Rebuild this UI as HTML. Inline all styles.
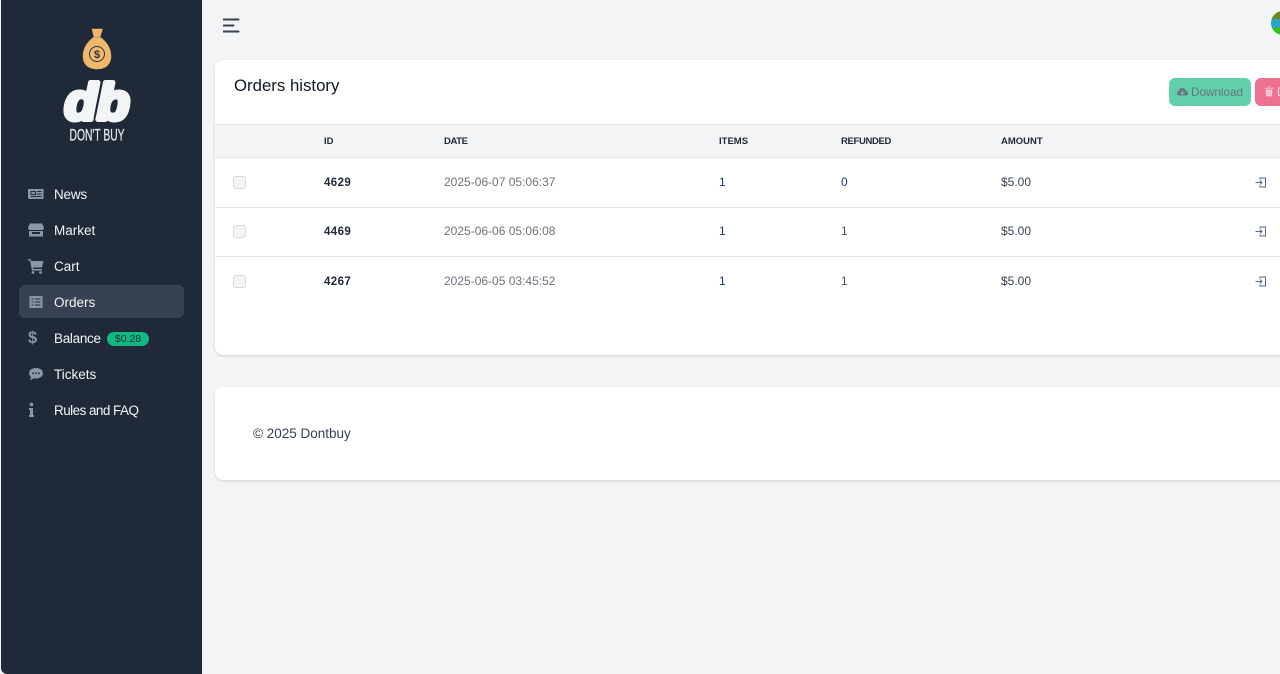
<!DOCTYPE html>
<html><head><meta charset="utf-8">
<style>
*{box-sizing:border-box}
html,body{margin:0;padding:0;width:1280px;height:674px;overflow:hidden;background:#f3f4f6;font-family:"Liberation Sans",sans-serif}
.a{position:absolute;white-space:nowrap}
#side{position:absolute;left:1px;top:0;width:201px;height:674px;background:#1f2937;border-bottom-left-radius:6px}
.nav{position:absolute;left:54px;color:#f3f4f6;font-size:13.5px;line-height:16px;margin-top:1px}
.ic{position:absolute;left:28px;width:16px;height:16px;fill:#8b95a5}
.card{position:absolute;left:215px;width:1075px;background:#fff;border-radius:8px;box-shadow:0 1px 2px rgba(0,0,0,.16)}
.th{position:absolute;top:135px;font-size:9.5px;font-weight:bold;color:#1f2937;line-height:12px;margin-top:1px}
.td{position:absolute;font-size:12px;line-height:14px;color:#374151}
.num{font-weight:bold;color:#1f2937;font-size:11.5px;letter-spacing:.4px}
.cb{position:absolute;left:233px;width:13px;height:13px;border:1px solid #d6d9de;background:#f3f4f6;border-radius:3px}
.ln{position:absolute;left:215px;width:1065px;height:1px;background:#e5e7eb}
</style></head><body>
<div id="side"></div>

<svg class="a" style="left:60px;top:25px" width="75" height="120" viewBox="60 25 75 120">
<path d="M92 29h10.500l-2.500 8C106 41 111 48 111 56 111 65 105 69 97 69 89 69 83 65 83 56 83 48 88 41 94 37z" fill="#f0b86c" stroke="#f0b86c" stroke-width=".5" stroke-linejoin="round"/>
<path d="M93.500 37h7" stroke="#c98f45" stroke-width=".8" fill="none"/>
<circle cx="97" cy="54" r="7.500" fill="none" stroke="#2a3340" stroke-width="1"/>
<text x="97" y="58" font-size="11" font-weight="bold" text-anchor="middle" fill="#2a3340" font-family="Liberation Sans">$</text>
<text x="64.500" y="119.500" font-size="51" font-weight="bold" font-style="italic" fill="#f3f4f6" stroke="#f3f4f6" stroke-width="5" stroke-linejoin="round" textLength="65" lengthAdjust="spacingAndGlyphs" font-family="Liberation Sans">db</text>
<text x="69.500" y="140.500" font-size="16.500" fill="#e5e7eb" stroke="#e5e7eb" stroke-width=".3" textLength="55" lengthAdjust="spacingAndGlyphs" font-family="Liberation Sans">DON'T BUY</text>
</svg>

<svg class="ic" style="top:186px" viewBox="0 0 16 16"><path d="M0 3h15.500v10H1.500Q0 13 0 11.500z"/><path d="M3 5.500h4.500v3H3zM9 5.500h4.500M9 8h4.500M3 10.500h10.500" stroke="#1f2937" stroke-width="1" fill="none"/></svg>
<div class="nav" style="top:186px;letter-spacing:-.2px">News</div>
<svg class="ic" style="top:222px" viewBox="0 0 16 16"><path d="M2 1.500h12l2 4q0 2.500-2 2.500H2Q0 8 0 5.500zM1 9h14v5.500H1zM4 10v2h8v-2z"/></svg>
<div class="nav" style="top:222px">Market</div>
<svg class="ic" style="top:258px" viewBox="0 0 16 16"><path d="M0 1h2.500l.6 2H15.500l-1.500 6.500H5l.3 1.500H14v1.500H4L2 2.500H0z"/><circle cx="5" cy="14.500" r="1.400"/><circle cx="12.500" cy="14.500" r="1.400"/></svg>
<div class="nav" style="top:258px">Cart</div>

<div class="a" style="left:19px;top:285px;width:165px;height:33px;background:#374151;border-radius:6px"></div>
<svg class="ic" style="top:294px" viewBox="0 0 16 16"><path d="M1.500 2h13v12h-13z"/><path d="M3.500 5h2M7 5h5.500M3.500 8h2M7 8h5.500M3.500 11h2M7 11h5.500" stroke="#374151" stroke-width="1.300"/></svg>
<div class="nav" style="top:294px">Orders</div>

<div class="a" style="left:28px;top:329px;font-size:16.500px;font-weight:bold;line-height:18px;color:#8b95a5">$</div>
<div class="nav" style="top:330px;letter-spacing:-.3px">Balance</div>
<div class="a" style="left:107px;top:332px;width:42px;height:14px;border-radius:7px;background:#10b981;color:#1f2937;font-size:10.500px;line-height:14px;text-align:center">$0.28</div>

<svg class="ic" style="top:366px" viewBox="0 0 16 16"><path d="M8 2c4 0 7 2.300 7 5.300s-3 5.300-7 5.300q-1.200 0-2.200-.3Q3.800 14 1.500 14q1.400-1.300 1.600-2.900Q1 9.500 1 7.300C1 4.300 4 2 8 2z"/><circle cx="5" cy="7.300" r=".9" fill="#1f2937"/><circle cx="8" cy="7.300" r=".9" fill="#1f2937"/><circle cx="11" cy="7.300" r=".9" fill="#1f2937"/></svg>
<div class="nav" style="top:366px">Tickets</div>
<svg class="ic" style="top:402px" viewBox="0 0 16 16"><circle cx="3.500" cy="2.500" r="1.800"/><path d="M1 6h4v7h1v2H1v-2h1V8H1z"/></svg>
<div class="nav" style="top:402px;letter-spacing:-.55px">Rules and FAQ</div>

<svg class="a" style="left:223px;top:18px" width="17" height="15" viewBox="0 0 17 15"><path d="M.5 1.500h15M.5 7.500h10M.5 13.500h15" stroke="#374151" stroke-width="2" stroke-linecap="round" fill="none"/></svg>

<svg class="a" style="left:1271px;top:11px" width="9" height="24" viewBox="0 0 9 24">
<defs><clipPath id="av"><circle cx="12" cy="12" r="12"/></clipPath></defs>
<g clip-path="url(#av)"><rect width="9" height="8" fill="#6b8a1e"/><rect y="8" width="9" height="9" fill="#2aa3c4"/><rect y="17" width="9" height="7" fill="#33c40a"/></g></svg>

<div class="card" style="top:60px;height:295px"></div>
<div class="a" style="left:215px;top:124px;width:1065px;height:34px;background:#f3f4f6;border-top:1px solid #e5e7eb;border-bottom:1px solid #e5e7eb"></div>
<div class="a" style="left:234px;top:76px;font-size:16.800px;line-height:20px;color:#111827">Orders history</div>

<div class="a" style="left:1169px;top:78px;width:82px;height:28px;background:#61d0aa;border-radius:6px"></div>
<svg class="a" style="left:1177px;top:87px" width="11" height="10" viewBox="0 0 11 10"><path d="M2.500 8.500Q0 8.500 0 6.200 0 4.500 1.800 4 2.200 1 5.200 1 7.800 1 8.500 3.500 11 3.800 11 6.200 11 8.500 8.500 8.500z" fill="#6b7280"/><path d="M5.500 3.500v3.500M3.800 5.500l1.700 1.700 1.700-1.700" stroke="#61d0aa" stroke-width="1" fill="none"/></svg>
<div class="a" style="left:1191px;top:86px;font-size:11.700px;line-height:14px;color:#6b7280">Download</div>
<div class="a" style="left:1255px;top:78px;width:40px;height:28px;background:#f0708f;border-radius:6px"></div>
<svg class="a" style="left:1264px;top:86px" width="10" height="11" viewBox="0 0 10 11"><path d="M.5 1.500h9v1.300H.5zM3.500.3h3v1.500h-3zM1.500 3.500h7l-.5 7H2zM3.500 4.500v5M5 4.500v5M6.500 4.500v5" fill="#fbdfe6" stroke="#f0708f" stroke-width=".4"/></svg>
<div class="a" style="left:1277px;top:86px;font-size:11.500px;line-height:14px;color:#fbdfe6">D</div>

<div class="th" style="left:324px">ID</div>
<div class="th" style="left:444px;letter-spacing:-.4px">DATE</div>
<div class="th" style="left:719px">ITEMS</div>
<div class="th" style="left:841px;letter-spacing:-.35px">REFUNDED</div>
<div class="th" style="left:1001px">AMOUNT</div>

<div class="ln" style="top:207px"></div>
<div class="ln" style="top:256px"></div>

<div class="cb" style="top:176px"></div>
<div class="td num" style="left:324px;top:176px">4629</div>
<div class="td" style="left:444px;top:175px;color:#6b7280">2025-06-07 05:06:37</div>
<div class="td" style="left:719px;top:175px;color:#1e3a6e">1</div>
<div class="td" style="left:841px;top:175px;color:#1e3a6e">0</div>
<div class="td" style="left:1001px;top:175px">$5.00</div>

<div class="cb" style="top:225px"></div>
<div class="td num" style="left:324px;top:225px">4469</div>
<div class="td" style="left:444px;top:224px;color:#6b7280">2025-06-06 05:06:08</div>
<div class="td" style="left:719px;top:224px;color:#1e3a6e">1</div>
<div class="td" style="left:841px;top:224px;color:#5b5136">1</div>
<div class="td" style="left:1001px;top:224px">$5.00</div>

<div class="cb" style="top:275px"></div>
<div class="td num" style="left:324px;top:275px">4267</div>
<div class="td" style="left:444px;top:274px;color:#6b7280">2025-06-05 03:45:52</div>
<div class="td" style="left:719px;top:274px;color:#1e3a6e">1</div>
<div class="td" style="left:841px;top:274px;color:#5b5136">1</div>
<div class="td" style="left:1001px;top:274px">$5.00</div>

<svg class="a" style="left:1255px;top:177px" width="12" height="11" viewBox="0 0 12 11"><path d="M5 2.500V1h5.500v9H5V8.500M.5 5.500h6.500M5 3.500l2 2-2 2" stroke="#55658a" stroke-width="1" fill="none"/></svg>
<svg class="a" style="left:1255px;top:226px" width="12" height="11" viewBox="0 0 12 11"><path d="M5 2.500V1h5.500v9H5V8.500M.5 5.500h6.500M5 3.500l2 2-2 2" stroke="#55658a" stroke-width="1" fill="none"/></svg>
<svg class="a" style="left:1255px;top:276px" width="12" height="11" viewBox="0 0 12 11"><path d="M5 2.500V1h5.500v9H5V8.500M.5 5.500h6.500M5 3.500l2 2-2 2" stroke="#55658a" stroke-width="1" fill="none"/></svg>

<div class="card" style="top:387px;height:93px"></div>
<div class="a" style="left:253px;top:426px;font-size:13.500px;line-height:16px;color:#374151">© 2025 Dontbuy</div>
</body></html>
